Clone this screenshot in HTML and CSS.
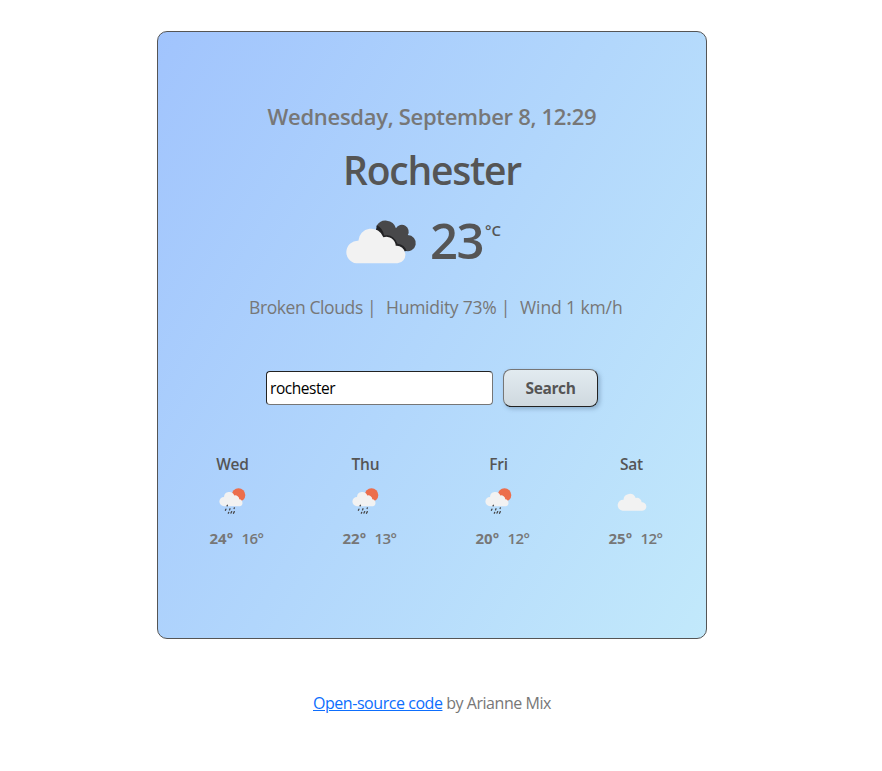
FILE: index.html
```html
<!DOCTYPE html>
<html lang="en">
<head>
<meta charset="utf-8">
<title>Weather</title>
<link rel="stylesheet" href="styles.css">
</head>
<body>
<svg width="0" height="0" class="defs" aria-hidden="true">
  <symbol id="cloud" viewBox="0 0 60 38">
    <path d="M11 37.500A11 11 0 0 1 13 15.600A12.500 12.500 0 0 1 37.300 12.200A9 9 0 0 1 49.300 20.500A8.500 8.500 0 0 1 51 37.500Z"/>
  </symbol>
  <symbol id="rain" viewBox="0 0 27 27">
    <circle cx="19.500" cy="7" r="6.800" fill="#ec6e4c"/>
    <path fill="#f2f2f2" d="M5 18.200A4.600 4.600 0 0 1 5 9A5.300 5.300 0 0 1 15.300 7.500A4 4 0 0 1 20.300 11.200A3.600 3.600 0 0 1 21 18.200Z"/>
    <path stroke="#48484a" stroke-width="1.300" stroke-linecap="round" fill="none" d="M8.400 17.300l-.3.600M6.900 21.200l-.5 1.100M11 20.800l-.5 1.100M9.700 24.400l-.4.800M15.400 19.800l-.3.700M12.700 23.600l-.7 1.500M15.300 23.600l-.8 1.700"/>
  </symbol>
</svg>
<main class="card">
  <h3 class="date"><span>Wednesday, September 8, 12:29</span></h3>
  <h1 class="city"><span>Rochester</span></h1>
  <div class="now">
    <svg class="now-icon" viewBox="0 0 69 43.500">
      <path fill="#48484a" d="M30.500 7A10.300 10.300 0 0 1 49.500 8.800A6.500 6.500 0 0 1 61 15.500A7.800 7.800 0 1 1 58 30.500L40 22Z"/>
      <path fill="#222224" d="M31 6Q37 9 38 16Q47 14 51 24Q58 25 60 31L45 33L29 16Z"/>
      <use href="#cloud" x="0" y="5.500" width="60" height="38" fill="#f2f2f2"/>
    </svg>
    <span class="temp">23</span><span class="unit">°C</span>
  </div>
  <div class="details">
    <span class="d1">Broken Clouds |</span><span class="d2">Humidity 73% |</span><span class="d3">Wind 1 km/h</span>
  </div>
  <form class="search">
    <input type="text" value="rochester" aria-label="City">
    <button type="button"><span>Search</span></button>
  </form>
  <section class="forecast">
    <div class="day"><h2>Wed</h2><svg class="rain"><use href="#rain"/></svg><p><b>24°</b><span>16°</span></p></div>
    <div class="day"><h2>Thu</h2><svg class="rain"><use href="#rain"/></svg><p><b>22°</b><span>13°</span></p></div>
    <div class="day"><h2>Fri</h2><svg class="rain"><use href="#rain"/></svg><p><b>20°</b><span>12°</span></p></div>
    <div class="day"><h2>Sat</h2><svg class="overcast" fill="#f2f2f2"><use href="#cloud"/></svg><p><b>25°</b><span>12°</span></p></div>
  </section>
</main>
<footer><a href="#">Open-source code</a> by Arianne Mix</footer>
</body>
</html>
```
FILE: styles.css
```css
* { box-sizing: border-box; }
body {
  margin: 0;
  padding-top: 31px;
  font-family: "Segoe UI", "Open Sans", "Noto Sans", sans-serif;
  font-size: 16px;
  color: #777;
  background: #fff;
  white-space: nowrap;
}
h1, h2, h3, p { margin: 0; }
.defs { position: absolute; }
.card {
  width: 550px;
  height: 608px;
  margin-left: 157px;
  padding-top: 69px;
  border: 1px solid #555;
  border-radius: 10px;
  background: linear-gradient(120deg, #a1c4fd 0%, #c2e9fb 100%);
}
.date {
  text-align: center;
  font-size: 22px;
  line-height: 30px;
  font-weight: 600;
  letter-spacing: -0.300px;
}
.city {
  margin-top: 14px;
  text-align: center;
  font-size: 39px;
  line-height: 50px;
  font-weight: 600;
  color: #555;
  letter-spacing: -1.250px;
}
.now {
  display: flex;
  height: 68px;
  margin-top: 12px;
  padding-left: 187px;
  color: #555;
}
.now-icon { width: 71px; height: 45px; margin-top: 12px; overflow: visible; }
.temp {
  width: 54px;
  margin-left: 14px;
  font-size: 49px;
  line-height: 66px;
  font-weight: 600;
  letter-spacing: -1.500px;
}
.unit { margin-left: 1px; padding-top: 13px; font-size: 15px; line-height: 20px; font-weight: 600; }
.details {
  display: flex;
  margin-top: 17px;
  padding-left: 91px;
  font-size: 17.500px;
  line-height: 30px;
  letter-spacing: -0.250px;
}
.d1 { width: 137px; letter-spacing: -0.400px; }
.d2 { width: 134px; }
.d3 { letter-spacing: -0.100px; }
.search { display: flex; align-items: center; gap: 10px; margin: 47px 0 0 108px; }
.search input {
  width: 227px;
  height: 34px;
  padding: 1px 3px;
  border: 1px solid;
  border-color: #222 #767676 #767676 #222;
  border-radius: 4px;
  background: #fff;
  color: #000;
  font: 400 15.500px/24px "Segoe UI", "Open Sans", sans-serif;
  letter-spacing: -0.450px;
}
.search button {
  width: 95px;
  height: 38px;
  padding: 0;
  border: 1px solid;
  border-color: #767676 #222 #222 #767676;
  border-radius: 8px;
  background: linear-gradient(#e2ebf0, #cfd9df);
  box-shadow: 2px 2px 4px rgba(60, 90, 120, .35);
  color: #555;
  font: 700 15.500px/24px "Segoe UI", "Open Sans", sans-serif;
  letter-spacing: -0.400px;
}
.forecast {
  display: grid;
  grid-template-columns: repeat(4, 133px);
  margin: 45px 0 0 8px;
}
.day { display: flex; flex-direction: column; align-items: center; }
.day h2 { font-size: 15.500px; line-height: 24px; font-weight: 600; color: #555; letter-spacing: -0.200px; }
.day svg { display: block; }
.rain { width: 27px; height: 27px; margin: 12px 0 11px; }
.overcast { width: 30px; height: 19px; margin: 16px 0 15px; }
.day p { display: flex; margin-left: 16px; line-height: 24px; font-size: 15px; }
.day b { width: 32px; font-weight: 700; }
.day span { width: 30px; font-weight: 600; letter-spacing: -0.600px; }
footer {
  margin: 52px 0 0 313px;
  line-height: 24px;
  letter-spacing: -0.450px;
}
footer a { color: #0d6efd; }
```
